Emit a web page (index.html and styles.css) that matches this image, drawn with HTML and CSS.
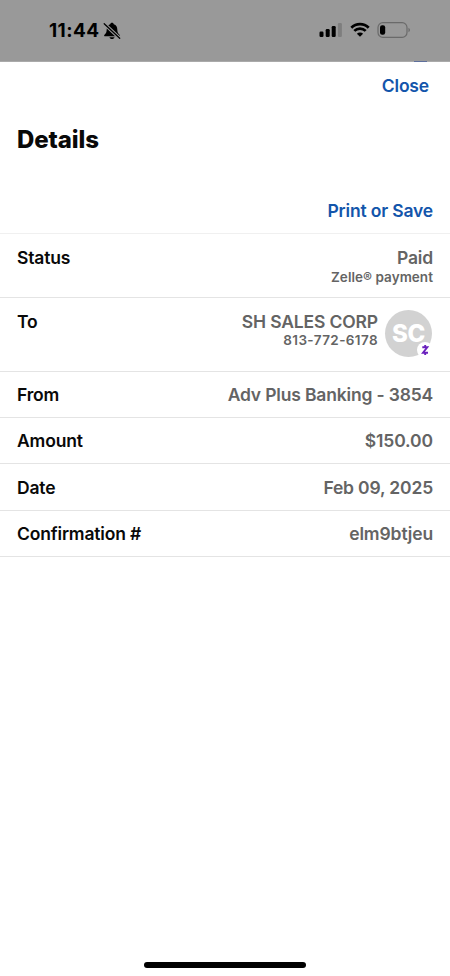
FILE: index.html
```html
<!DOCTYPE html>
<html lang="en">
<head>
<meta charset="utf-8">
<meta name="viewport" content="width=device-width, initial-scale=1">
<title>Details</title>
<link rel="stylesheet" href="styles.css">
</head>
<body>
<header class="status-bar">
  <div class="clock"><span class="time">11:44</span>
    <svg class="bell" width="18" height="18" viewBox="0 0 18 18">
      <path d="M9 .8c-1 0-1.700.6-1.800 1.500C4.700 3 3.700 5.100 3.700 7.600c0 2.900-.8 4-2.200 5.100-.7.600-.4 1.600.6 1.600h13.800c1 0 1.300-1 .6-1.600-1.400-1.100-2.200-2.200-2.200-5.100 0-2.500-1-4.600-3.500-5.300C10.700 1.400 10 .8 9 .8zM6.500 15.200c.2 1.100 1.200 1.900 2.500 1.900s2.300-.8 2.500-1.900z"/>
      <path class="slash-gap" d="M1.200 1.700 16.700 16.200"/>
      <path class="slash" d="M1.200 1.700 16.700 16.200"/>
    </svg>
  </div>
  <div class="indicators">
    <svg width="24" height="16" viewBox="0 0 24 16">
      <rect x="0.500" y="9.500" width="4" height="5.500" rx="1.200"/>
      <rect x="6.700" y="7" width="4" height="8" rx="1.200"/>
      <rect x="12.700" y="4" width="4" height="11" rx="1.200"/>
      <rect class="faint" x="18.900" y="1" width="4" height="14" rx="1.200"/>
    </svg>
    <svg class="wifi" width="20" height="16" viewBox="0 0 20 16">
      <path d="M1.300 5.700a12.400 12.400 0 0 1 17.400 0"/>
      <path d="M4.300 8.900a8.100 8.100 0 0 1 11.400 0"/>
      <path class="dot" d="M10 14.800 6.900 11.700a4.400 4.400 0 0 1 6.200 0z"/>
    </svg>
    <svg class="battery" width="34" height="16" viewBox="0 0 34 16">
      <rect class="shell" x="1" y="0.700" width="29" height="14.600" rx="4.800"/>
      <rect x="3" y="3.200" width="5.200" height="9.600" rx="2.200"/>
      <path class="cap" d="M31.500 5.800c1.900.8 1.900 3.600 0 4.400z"/>
    </svg>
  </div>
  <span class="sheet-edge"></span>
</header>
<main class="sheet">
  <nav class="close-row"><a class="link close">Close</a></nav>
  <h1>Details</h1>
  <div class="print-row"><a class="link print">Print or Save</a></div>
  <dl>
    <div class="row status"><dt>Status</dt><dd><span>Paid</span><small class="note">Zelle® payment</small></dd></div>
    <div class="row to"><dt>To</dt><dd class="payee"><div><span class="payee-name">SH SALES CORP</span><small class="phone">813-772-6178</small></div>
      <div class="avatar"><span>SC</span>
        <svg class="zelle" width="16" height="16" viewBox="0 0 16 16"><circle cx="8" cy="8" r="8"/><path d="M5.300 5.300h5L6 10.700h5M8.200 3v2.300M8.200 10.700V13"/></svg>
      </div></dd></div>
    <div class="row"><dt>From</dt><dd>Adv Plus Banking - 3854</dd></div>
    <div class="row tall"><dt>Amount</dt><dd class="money">$150.00</dd></div>
    <div class="row date"><dt>Date</dt><dd>Feb 09, 2025</dd></div>
    <div class="row"><dt>Confirmation #</dt><dd class="code">elm9btjeu</dd></div>
  </dl>
  <div class="home-indicator"></div>
</main>
</body>
</html>
```
FILE: styles.css
```css
* { box-sizing: border-box; }
body {
  margin: 0;
  height: 976px;
  display: flex;
  flex-direction: column;
  background: #fff;
  color: #090909;
  font-family: Inter, "Liberation Sans", sans-serif;
  font-size: 17.500px;
  font-weight: 560;
  line-height: 22px;
  letter-spacing: -0.17px;
  overflow: hidden;
}
.status-bar {
  position: relative;
  flex: none;
  height: 62px;
  padding: 0 39px 0 49px;
  display: flex;
  justify-content: space-between;
  background: #999;
  border-bottom: 1px solid #aaa;
}
.clock { display: flex; padding-top: 20px; color: #000; }
.time { width: 54px; font-size: 19px; font-weight: 700; letter-spacing: 0.4px; }
.bell { margin-top: 2px; }
.slash, .slash-gap { fill: none; stroke: #999; stroke-width: 3.400; }
.slash { stroke: #000; stroke-width: 1.300; stroke-linecap: round; }
.indicators { display: flex; padding-top: 22px; }
.faint { fill: #7e7e7e; }
.wifi { margin-left: 7px; fill: none; stroke: #000; stroke-width: 2.700; }
.wifi .dot { fill: #000; stroke: none; }
.battery { margin-left: 7px; }
.shell { fill: none; stroke: #6a6a6a; stroke-width: 1.200; }
.cap { fill: #666; }
.sheet-edge { position: absolute; left: 414px; bottom: -1px; width: 13px; height: 1.500px; background: #5e6f9c; }
.sheet { flex: 1; display: flex; flex-direction: column; }
.close-row { height: 46px; padding: 13px 21px 0 0; text-align: right; }
.link { color: #1355ab; }
h1 { margin: 0; height: 86px; padding: 18px 17px 0; font-size: 24px; line-height: 28px; font-weight: 780; letter-spacing: -0.1px; }
.print-row { height: 39px; padding: 6px 17px 0; text-align: right; }
dl { margin: 0; border-top: 1px solid #f0f0f0; }
dt { color: #090909; }
dd { margin: 0; text-align: right; color: #646464; }
.row { height: 46px; padding: 12px 17px 0; display: flex; justify-content: space-between; border-bottom: 1px solid #e4e4e4; }
.row.tall { height: 46.500px; }
.row.date { height: 46.500px; padding-top: 13px; }
.row.status { height: 64px; padding-top: 13px; }
.row.to { height: 73.500px; padding-top: 13px; }
dd span, dd small { display: block; }
small { font-size: 13.500px; line-height: 16px; }
.note { letter-spacing: 0.05px; }
.phone { margin-top: -1px; letter-spacing: 0.4px; }
.payee-name { letter-spacing: -0.150px; }
.money, .code { letter-spacing: -0.1px; }
.payee { display: flex; gap: 7px; }
.avatar { position: relative; width: 47px; height: 47px; margin: -1px 1px 0 0; border-radius: 50%; background: #d2d2d2; color: #fff; font-size: 24px; font-weight: 800; letter-spacing: -0.3px; text-align: center; line-height: 48px; }
.zelle { position: absolute; right: -1px; bottom: -1px; fill: #fff; }
.zelle path { fill: none; stroke: #6a20bd; stroke-width: 1.900; }
.home-indicator { width: 162px; height: 6px; margin: auto auto 8px; border-radius: 3px; background: #000; }
```
